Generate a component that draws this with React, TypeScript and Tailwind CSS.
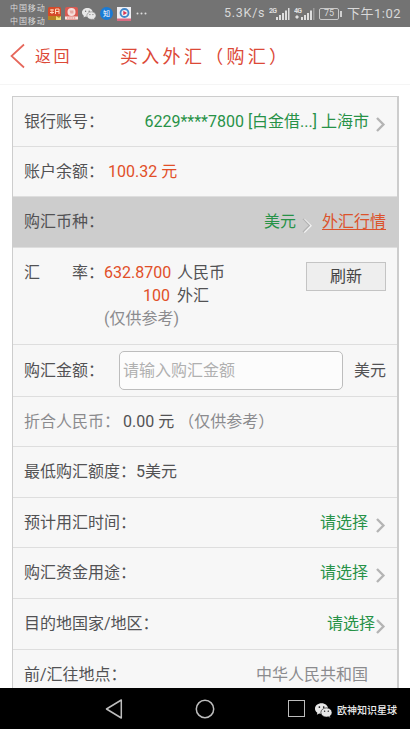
import React from "react";

const cjk = "font-[Roboto,'Noto_Sans_CJK_SC',sans-serif]";

function Arrow({ className = "", color = "#b4b4b4", light = false }: { className?: string; color?: string; light?: boolean }) {
  return (
    <svg className={`h-[15px] w-[10px] shrink-0 ${className}`} viewBox="0 0 10 15" fill="none">
      {light && <path d="M2 1.5 L8.6 7.8 L2 14.2" stroke="#f4f4f4" strokeWidth="2" />}
      <path d="M1 1 L7.4 7.5 L1 14" stroke={color} strokeWidth={light ? "1.3" : "2.4"} />
    </svg>
  );
}

function WeChat({ className = "", hole = "#737373" }: { className?: string; hole?: string }) {
  return (
    <svg className={className} viewBox="0 0 26 22">
      <path d="M10 0C4.500 0 0 3.700 0 8.200c0 2.500 1.400 4.700 3.600 6.200L2.800 17.600l3.600-2c1.100.3 2.400.5 3.600.5 5.500 0 10-3.500 10-7.900S15.500 0 10 0Z" fill="#e8e8e8" />
      <path d="M17.500 7c-4.700 0-8.500 3.100-8.500 7s3.800 7 8.500 7c1 0 2-.2 2.900-.4l3.100 1.700-.8-2.800c2-1.300 3.300-3.300 3.300-5.500 0-3.900-3.800-7-8.500-7Z" fill="#e8e8e8" stroke={hole} strokeWidth="1" />
      <g fill={hole}>
        <circle cx="6.700" cy="5.800" r="1.300" /><circle cx="13.300" cy="5.800" r="1.300" />
        <circle cx="14.700" cy="12" r="1.100" /><circle cx="20.300" cy="12" r="1.100" />
      </g>
    </svg>
  );
}

function Signal({ label }: { label: string }) {
  return (
    <svg className="h-[16px] w-[22px]" viewBox="0 0 22 16" fill="#dedede">
      <text x="0" y="7" fontSize="7" fontWeight="700" fontFamily="Roboto, sans-serif" textLength="8">{label}</text>
      <rect x="7" y="11" width="2" height="3" />
      <rect x="10" y="9" width="2" height="5" />
      <rect x="13" y="7" width="2" height="7" />
      <rect x="16" y="4.500" width="2" height="9.500" />
      <rect x="19" y="2" width="1.500" height="12" fill={label === "4G" ? "#999" : "#dedede"} />
      {label === "4G" && <path d="M1 11 l2-2 l2 2 l-2 2Z" />}
    </svg>
  );
}

function StatusBar() {
  return (
    <header className="flex h-[27px] bg-[#737373] pl-[10px] text-[#d9d9d9]">
      <div className="w-[36px] pt-[2px] font-['Noto_Sans_CJK_SC',sans-serif] text-[8px] leading-[12.500px] tracking-[0.9px] whitespace-nowrap">
        <div>中国移动</div>
        <div>中国移动</div>
      </div>
      <div className="flex w-[162px] items-center">
        <svg className="ml-[2px] h-[13px] w-[13px]" viewBox="0 0 13 13">
          <rect width="13" height="13" rx="1.500" fill="#d54a2a" />
          <path d="M2 3h4M2 5.500h4M4 2v5M7.500 2h3.500v5M7.500 4.500H11M7.500 2v5" stroke="#ffd4b8" fill="none" />
          <rect y="9" width="13" height="4" fill="#b98223" />
          <path d="M8 13V9l3 2 2-2v4Z" fill="#f3dc74" />
        </svg>
        <svg className="ml-[4px] h-[13px] w-[13px]" viewBox="0 0 13 13">
          <rect width="13" height="13" rx="2" fill="#d85a52" />
          <circle cx="6.500" cy="5" r="4" fill="#f6dedb" />
          <path d="M4.500 3.500h4v3h-3Z" fill="#e4aaa5" />
          <rect y="9.500" width="13" height="3" fill="#fae6e3" />
          <path d="M2 11h9" stroke="#d9756e" strokeDasharray="1.500 .7" />
        </svg>
        <WeChat className="ml-[4px] h-[12px] w-[14px]" />
        <div className="ml-[4px] flex h-[13px] w-[13px] items-center justify-center rounded-full bg-[#1a7bd5] font-['Noto_Sans_CJK_SC',sans-serif] text-[7px] leading-none text-white">知</div>
        <svg className="ml-[4px] h-[14px] w-[14px]" viewBox="0 0 14 14">
          <rect width="14" height="14" fill="#eeeef2" />
          <circle cx="7.500" cy="6" r="4" fill="none" stroke="#4186c9" strokeWidth="1.800" />
          <path d="M6.300 3.800 L10 6 L6.300 8.200Z" fill="#db3453" />
          <rect y="11.500" width="14" height="2.500" fill="#d96b82" />
        </svg>
        <svg className="ml-[5px] h-[3px] w-[11px]" viewBox="0 0 11 3" fill="#dedede"><circle cx="1.500" cy="1.500" r="1" /><circle cx="5.500" cy="1.500" r="1" /><circle cx="9.500" cy="1.500" r="1" /></svg>
      </div>
      <div className="flex items-center pl-[16px]">
        <span className="w-[45px] font-[Roboto,sans-serif] text-[12.500px] leading-none tracking-[0.750px]">5.3K/s</span>
        <Signal label="2G" />
        <div className="w-[3px]" />
        <Signal label="4G" />
        <div className="ml-[3px] flex h-[12px] w-[20px] items-center justify-center rounded-[2px] border border-[#c8c8c8] font-[Roboto,sans-serif] text-[9px] leading-none">75</div>
        <div className="ml-px h-[6px] w-[2px] bg-[#d0d0d0]" />
        <span className={`ml-[5px] ${cjk} text-[13px] leading-none tracking-[0.500px] whitespace-nowrap`}>下午1:02</span>
      </div>
    </header>
  );
}

function Row({ label, children, className = "" }: { label?: string; children?: React.ReactNode; className?: string }) {
  return (
    <div className={`flex shrink-0 items-center border-b border-[#dedede] pr-[11px] pl-[11px] ${className}`}>
      {label && <span>{label}</span>}
      {children}
    </div>
  );
}

export default function App() {
  return (
    <div lang="zh-CN" className={`flex h-[729px] w-[410px] flex-col overflow-hidden bg-white ${cjk} text-[16px] leading-[24px] whitespace-nowrap text-[#525254]`}>
      <StatusBar />
      <nav className="flex h-[58px] items-center border-b border-[#f5f5f5] text-[#dc4937]">
        <svg className="ml-[10px] h-[26px] w-[15px]" viewBox="0 0 15 26" fill="none"><path d="M14 1.500 L1.500 13 L14 24.500" stroke="#e6675b" strokeWidth="1.700" /></svg>
        <span className="ml-[10px] w-[85px] pt-[3px] text-[16px] tracking-[2.500px]">返回</span>
        <h1 className="pt-[3px] text-[18px] font-normal tracking-[3.300px]">买入外汇（购汇）</h1>
      </nav>
      <main className="mt-[11px] mr-[11px] ml-[12px] flex h-[592px] flex-col overflow-hidden border-t border-r-2 border-l border-[#cdcdcd] bg-[#f7f7f7]">
        <Row label="银行账号：" className="h-[50px]">
          <span className="ml-auto text-[#279247]">6229****7800 [白金借...] 上海市</span>
          <Arrow className="mt-[5px] ml-[7px]" />
        </Row>
        <Row label="账户余额：" className="h-[50px]">
          <span className="ml-[4px] text-[#e14f28]">100.32 元</span>
        </Row>
        <Row label="购汇币种：" className="h-[51px] bg-[#cdcdcd]">
          <span className="ml-auto text-[#279247]">美元</span>
          <Arrow light className="mt-[6px] ml-[6px]" />
          <a className="ml-[10px] text-[#dc532c] underline underline-offset-2">外汇行情</a>
        </Row>
        <div className="flex h-[97px] shrink-0 border-b border-[#dedede] pr-[11px] pl-[11px] leading-[23px]">
          <div className="flex w-[80px] justify-between pt-[13px]"><span>汇</span><span className="w-[32px]">率：</span></div>
          <div className="w-[66px] pt-[13px] text-right text-[#e14f28]">
            <div>632.8700</div>
            <div>100</div>
            <div className="text-left text-[#8b8b8e]">(仅供参考)</div>
          </div>
          <div className="ml-[7px] pt-[13px]"><div>人民币</div><div>外汇</div></div>
          <button className="mt-[14px] ml-auto h-[29px] w-[80px] border border-[#c4c4c4] bg-[#eeeeee] leading-[25px] text-[#444]">刷新</button>
        </div>
        <Row label="购汇金额：" className="h-[52px]">
          <input className="ml-[15px] h-[39px] w-[224px] rounded-[5px] border border-[#bdbdbd] bg-[#fcfcfc] px-[3px] placeholder:text-[#b0b0b0]" placeholder="请输入购汇金额" />
          <span className="ml-auto">美元</span>
        </Row>
        <Row className="h-[50px]">
          <span className="w-[99px] text-[#8b8b8e]">折合人民币：</span><span>0.00 元</span><span className="ml-[4px] text-[#8b8b8e]">（仅供参考）</span>
        </Row>
        <Row label="最低购汇额度：5美元" className="h-[51px]" />
        <Row label="预计用汇时间：" className="h-[50px]">
          <span className="ml-auto text-[#279247]">请选择</span><Arrow className="mt-[5px] ml-[8px]" />
        </Row>
        <Row label="购汇资金用途：" className="h-[51px]">
          <span className="ml-auto text-[#279247]">请选择</span><Arrow className="mt-[5px] ml-[8px]" />
        </Row>
        <Row label="目的地国家/地区：" className="h-[51px]">
          <span className="ml-auto text-[#279247]">请选择</span><Arrow className="mt-[5px] ml-px" />
        </Row>
        <Row label="前/汇往地点：" className="h-[50px]">
          <span className="mr-[18px] ml-auto text-[#8b8b8e]">中华人民共和国</span>
        </Row>
      </main>
      <footer className="flex h-[41px] items-center bg-black">
        <svg className="ml-[105px] h-[20px] w-[18px]" viewBox="0 0 18 20" fill="none"><path d="M16.300 1 V19 L1.500 10Z" stroke="#bdbdbd" strokeWidth="1.500" strokeLinejoin="round" /></svg>
        <svg className="ml-[72px] h-[20px] w-[20px]" viewBox="0 0 20 20" fill="none"><circle cx="10" cy="10" r="8.700" stroke="#bdbdbd" strokeWidth="1.500" /></svg>
        <div className="ml-[73px] h-[17px] w-[17px] border-[1.500px] border-[#bdbdbd]" />
        <WeChat className="mt-[3px] ml-[10px] h-[15px] w-[17px]" hole="#111" />
        <span className="mt-[3px] ml-[5px] font-['Noto_Sans_CJK_SC',sans-serif] text-[10px] leading-none font-medium text-[#eeeeee]">欧神知识星球</span>
      </footer>
    </div>
  );
}
